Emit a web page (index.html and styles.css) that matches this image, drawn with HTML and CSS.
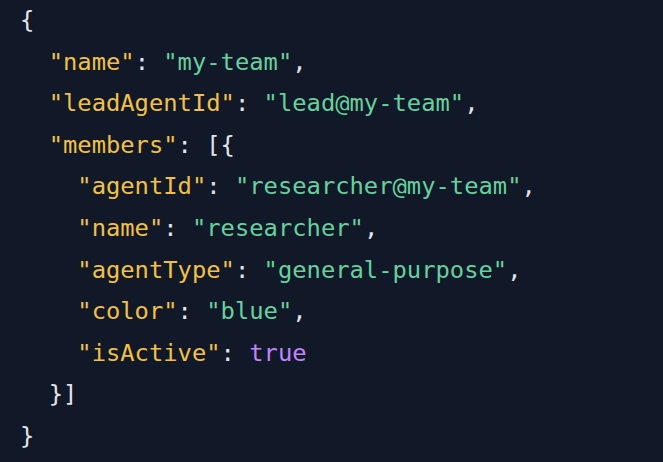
FILE: index.html
```html
<!DOCTYPE html>
<html>
<head>
<meta charset="utf-8">
<link rel="stylesheet" href="styles.css">
</head>
<body>
<pre class="code"><code><span class="p">{</span>
  <span class="k">"name"</span><span class="p">:</span> <span class="s">"my-team"</span><span class="p">,</span>
  <span class="k">"leadAgentId"</span><span class="p">:</span> <span class="s">"lead@my-team"</span><span class="p">,</span>
  <span class="k">"members"</span><span class="p">:</span> <span class="p">[{</span>
    <span class="k">"agentId"</span><span class="p">:</span> <span class="s">"researcher@my-team"</span><span class="p">,</span>
    <span class="k">"name"</span><span class="p">:</span> <span class="s">"researcher"</span><span class="p">,</span>
    <span class="k">"agentType"</span><span class="p">:</span> <span class="s">"general-purpose"</span><span class="p">,</span>
    <span class="k">"color"</span><span class="p">:</span> <span class="s">"blue"</span><span class="p">,</span>
    <span class="k">"isActive"</span><span class="p">:</span> <span class="b">true</span>
  <span class="p">}]</span>
<span class="p">}</span></code></pre>
</body>
</html>
```
FILE: styles.css
```css
html, body {
  margin: 0;
  padding: 0;
  background: #111827;
  width: 663px;
  height: 462px;
  overflow: hidden;
}
.code {
  margin: 0;
  padding: 0 0 0 20px;
  font-family: "DejaVu Sans Mono", monospace;
  font-size: 23.8px;
  line-height: 41.6px;
  color: #e2e4ea;
}
.p { color: #e2e4ea; }
.k { color: #f2c046; }
.s { color: #66d19e; }
.b { color: #c084fc; }
```
